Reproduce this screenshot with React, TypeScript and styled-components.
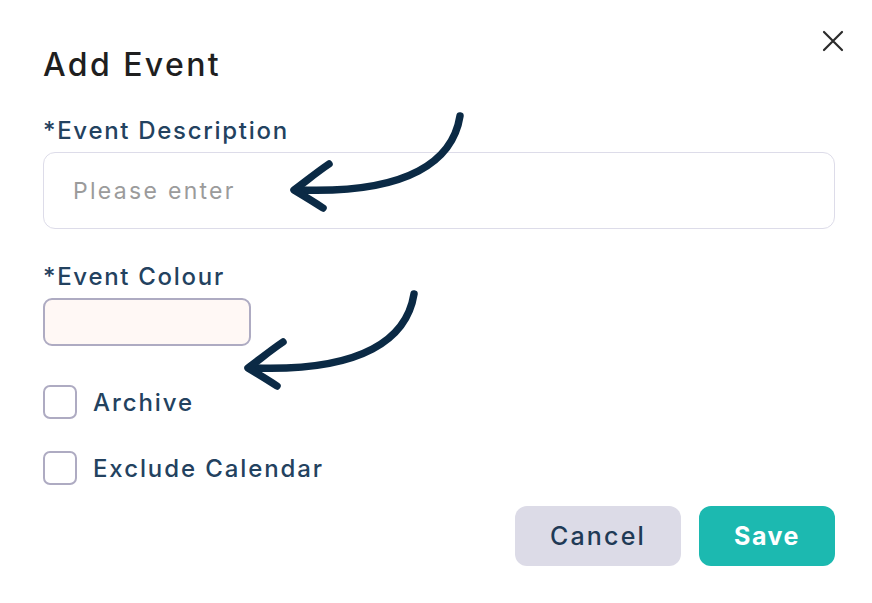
import React from 'react';
import styled, { createGlobalStyle } from 'styled-components';

const GlobalStyle = createGlobalStyle`
  html, body {
    margin: 0;
    padding: 0;
    background: #ffffff;
  }
  body {
    font-family: Inter, 'Noto Sans', sans-serif;
  }
`;

const Dialog = styled.div`
  position: relative;
  width: 872px;
  height: 603px;
  box-sizing: border-box;
  padding: 45px 37px 0 43px;
  display: flex;
  flex-direction: column;
  background: #fff;
`;

const Title = styled.h2`
  margin: 0;
  font-size: 32px;
  line-height: 40px;
  font-weight: 500;
  color: #1f1f1f;
  letter-spacing: 2.4px;
`;

const CloseButton = styled.button`
  position: absolute;
  top: 29px;
  right: 27px;
  width: 24px;
  height: 24px;
  padding: 0;
  border: none;
  background: transparent;
  cursor: pointer;
  display: flex;
  align-items: center;
  justify-content: center;
`;

const Field = styled.div<{ $top: number }>`
  display: flex;
  flex-direction: column;
  align-items: flex-start;
  margin-top: ${(p) => p.$top}px;
`;

const Label = styled.label`
  font-size: 24px;
  line-height: 30px;
  font-weight: 500;
  color: #23425f;
  margin-bottom: 6px;
  letter-spacing: 1.7px;
`;

const TextInput = styled.input`
  width: 100%;
  height: 77px;
  box-sizing: border-box;
  border: 1.5px solid #dddce9;
  border-radius: 12px;
  padding: 0 29px;
  font-family: inherit;
  font-size: 23px;
  letter-spacing: 2.3px;
  color: #333;
  outline: none;
  &::placeholder {
    color: #9b9b9b;
  }
`;

const ColourBox = styled.div<{ $colour: string }>`
  width: 208px;
  height: 48px;
  box-sizing: border-box;
  border: 2px solid #aeabc2;
  border-radius: 9px;
  background: ${(p) => p.$colour};
`;

const CheckRow = styled.label<{ $top: number }>`
  display: flex;
  align-items: center;
  gap: 16px;
  height: 34px;
  margin-top: ${(p) => p.$top}px;
  cursor: pointer;
`;

const Box = styled.span`
  width: 34px;
  height: 34px;
  box-sizing: border-box;
  border: 2px solid #aeabc2;
  border-radius: 7px;
  background: #fff;
`;

const CheckText = styled.span`
  font-size: 24px;
  font-weight: 500;
  color: #23425f;
  letter-spacing: 1.9px;
`;

const Footer = styled.div`
  display: flex;
  justify-content: flex-end;
  gap: 18px;
  margin-top: 21px;
`;

const Button = styled.button<{ $primary?: boolean }>`
  height: 60px;
  width: ${(p) => (p.$primary ? 136 : 166)}px;
  border: none;
  border-radius: 12px;
  font-family: inherit;
  font-size: 25px;
  letter-spacing: ${(p) => (p.$primary ? 1.5 : 2.2)}px;
  font-weight: ${(p) => (p.$primary ? 700 : 500)};
  color: ${(p) => (p.$primary ? '#ffffff' : '#1f3a56')};
  background: ${(p) => (p.$primary ? '#1cb9b0' : '#dcdbe7')};
  cursor: pointer;
`;

const Arrow = styled.svg<{ $x: number; $y: number }>`
  position: absolute;
  left: ${(p) => p.$x}px;
  top: ${(p) => p.$y}px;
  overflow: visible;
  pointer-events: none;
`;

function HandArrow({ x, y }: { x: number; y: number }) {
  return (
    <Arrow $x={x} $y={y} width="180" height="105" viewBox="0 0 180 105">
      <path
        d="M175 6 C168 50 125 84 14 80"
        fill="none"
        stroke="#0b2a45"
        strokeWidth="7.5"
        strokeLinecap="round"
      />
      <path
        d="M44 54 C32 62 20 72 9 80 C19 86 29 92 38 98"
        fill="none"
        stroke="#0b2a45"
        strokeWidth="7.5"
        strokeLinecap="round"
        strokeLinejoin="round"
      />
    </Arrow>
  );
}

export default function App() {
  return (
    <>
      <GlobalStyle />
      <Dialog>
        <CloseButton aria-label="Close">
          <svg width="22" height="22" viewBox="0 0 22 22">
            <path d="M2 2 L20 20 M20 2 L2 20" stroke="#2b2b2b" strokeWidth="2.2" strokeLinecap="round" />
          </svg>
        </CloseButton>
        <Title>Add Event</Title>

        <Field $top={31}>
          <Label htmlFor="desc">*Event Description</Label>
          <TextInput id="desc" placeholder="Please enter" />
        </Field>

        <Field $top={33}>
          <Label>*Event Colour</Label>
          <ColourBox $colour="#fff8f5" />
        </Field>

        <CheckRow $top={39}>
          <Box />
          <CheckText>Archive</CheckText>
        </CheckRow>
        <CheckRow $top={32}>
          <Box />
          <CheckText>Exclude Calendar</CheckText>
        </CheckRow>

        <Footer>
          <Button>Cancel</Button>
          <Button $primary>Save</Button>
        </Footer>

        <HandArrow x={285} y={110} />
        <HandArrow x={239} y={288} />
      </Dialog>
    </>
  );
}
